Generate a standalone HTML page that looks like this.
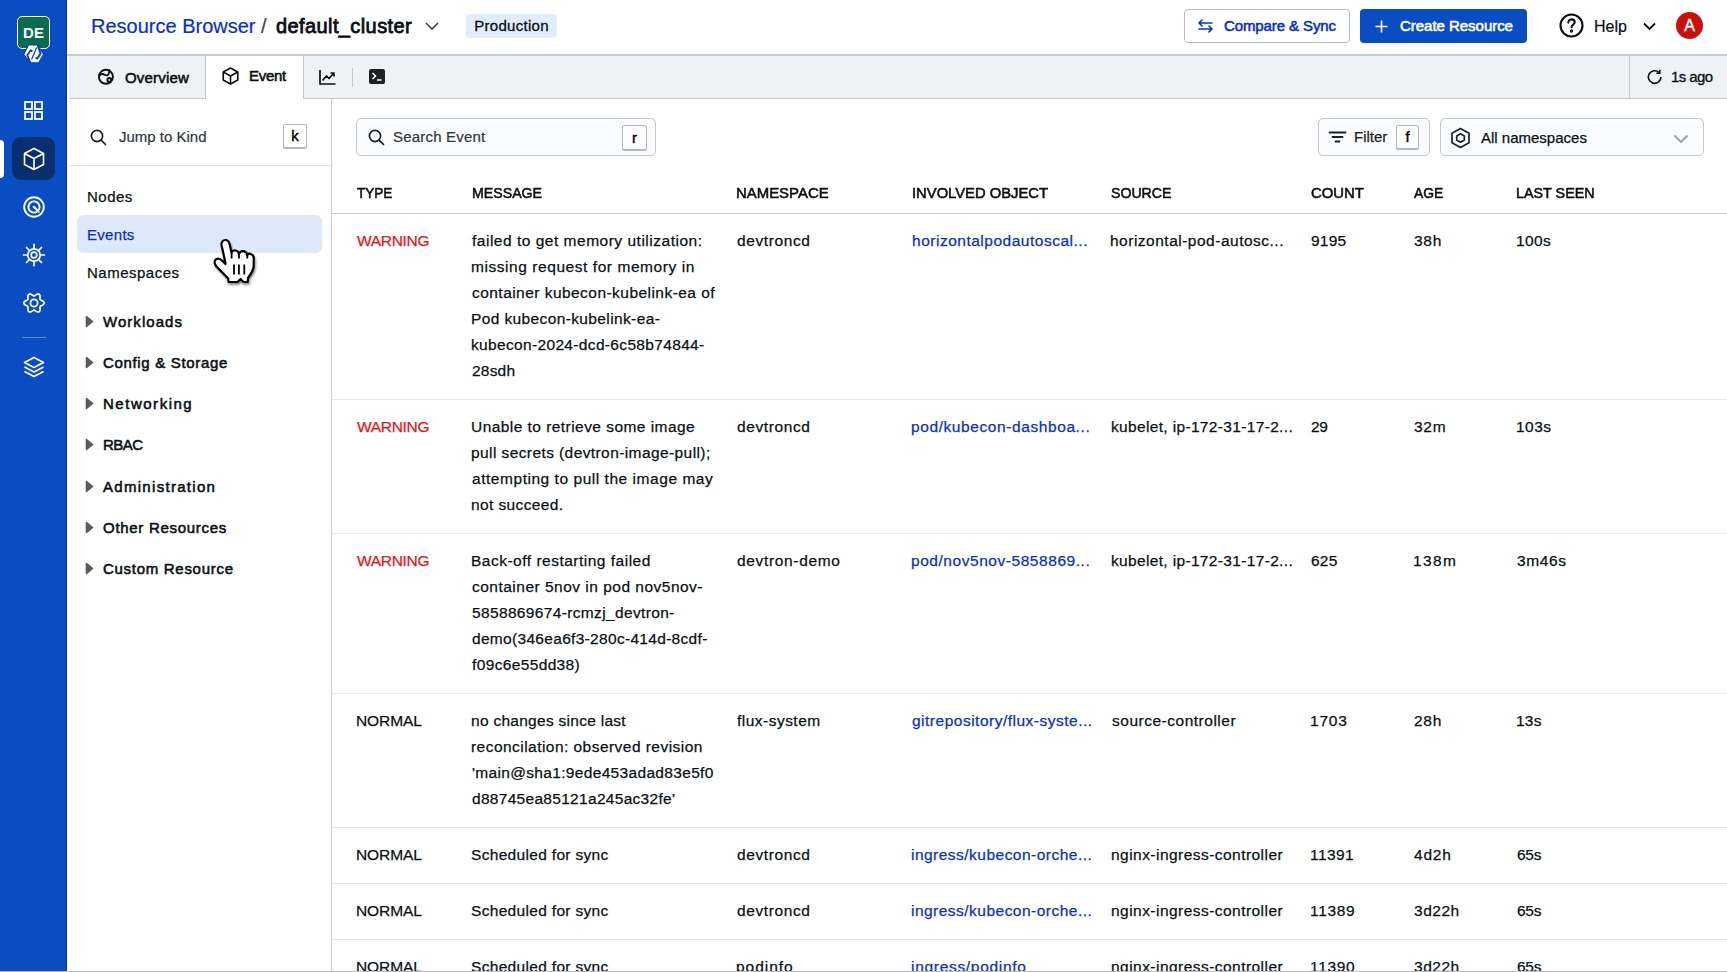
<!DOCTYPE html>
<html><head><meta charset="utf-8">
<style>
*{box-sizing:border-box;margin:0;padding:0}
html,body{width:1727px;height:972px;overflow:hidden;background:#fff;font-family:"Liberation Sans",sans-serif;color:#0b0f14}
.a{position:absolute;white-space:nowrap}
#nav{position:absolute;left:0;top:0;width:67px;height:972px;background:#0a4dc2;border-right:1px solid #0933a8}
#hdr{position:absolute;left:67px;top:0;width:1660px;height:54px;background:#fff}
#tabs{position:absolute;left:67px;top:54px;width:1660px;height:45px;background:#eef1f5;border-top:2px solid #c6c9ce;border-bottom:1px solid #c3c7cc}
#left{position:absolute;left:67px;top:99px;width:265px;height:873px;background:#fff;border-right:1px solid #c9cdd3}
#bottomline{position:absolute;left:0;top:971px;width:1727px;height:1px;background:#b9bcc0}
.t15{font-size:15px;line-height:20px}
.b{font-weight:400;-webkit-text-stroke:0.55px currentColor}
.kbd{position:absolute;border:1px solid #b5b9be;border-radius:2px;background:#fff;box-shadow:0 1px 0 #b5b9be;font-size:15px;text-align:center;color:#000;-webkit-text-stroke:0.4px currentColor}
.cell{position:absolute;font-size:15.5px;line-height:26px;white-space:nowrap;color:#0b0f14;letter-spacing:0.75px;-webkit-text-stroke:0.25px currentColor}
.num{letter-spacing:0.3px}
.typ{letter-spacing:0.2px}
.rowb{position:absolute;left:332px;width:1395px;height:1px;background:#e4e8ed}
.link{color:#0a30c0}
.warn{color:#e3161d}
</style></head><body>
<div id="nav">
  <!-- logo -->
  <div class="a" style="left:17px;top:16px;width:33px;height:33px;background:#0a6b53;border:1.5px solid #fff;border-radius:5px;color:#fff;font-size:15px;font-weight:700;text-align:center;line-height:31px">DE</div>
  <svg class="a" style="left:23px;top:43px" width="22" height="22" viewBox="0 0 22 22"><path d="M0.7 11.4 L5.6 1.9 L14.3 1.9 L20.6 11.1 L15.7 19.8 L7.1 19.8 Z" fill="#fff" stroke="#0a3dc0" stroke-width="1.1" stroke-linejoin="round"/><path d="M14.6 2.2 L17.6 10.6 L14.2 15.6 L12.6 14.4" fill="none" stroke="#0a3dc0" stroke-width="1.9" stroke-linejoin="round"/><path d="M7.2 19.6 L4.3 12 L7.8 7.2 L9.4 8.4" fill="none" stroke="#0a3dc0" stroke-width="1.9" stroke-linejoin="round"/><path d="M13.6 4.5 L8.6 16.5" stroke="#0a3dc0" stroke-width="1.2"/></svg>
  <!-- grid -->
  <svg class="a" style="left:24px;top:101px" width="19" height="19" viewBox="0 0 19 19" fill="none" stroke="#fff" stroke-width="1.8"><rect x="1" y="1" width="7" height="7"/><rect x="11" y="1" width="7" height="7"/><rect x="1" y="11" width="7" height="7"/><rect x="11" y="11" width="7" height="7"/></svg>
  <!-- active -->
  <div class="a" style="left:0;top:140px;width:4px;height:38px;background:#fff;border-radius:0 4px 4px 0"></div>
  <div class="a" style="left:12px;top:137px;width:43px;height:43px;background:#0a2f6e;border-radius:9px"></div>
  <svg class="a" style="left:23px;top:147px" width="22" height="24" viewBox="0 0 22 24" fill="none" stroke="#fff" stroke-width="1.6" stroke-linejoin="round"><path d="M11 1.5 L20.5 6.5 L20.5 17.5 L11 22.5 L1.5 17.5 L1.5 6.5 Z"/><path d="M1.5 6.5 L11 11.5 L20.5 6.5 M11 11.5 L11 22.5"/></svg>
  <!-- target -->
  <svg class="a" style="left:23px;top:195.5px" width="22" height="22" viewBox="0 0 22 22" fill="none" stroke="#fff" stroke-width="1.9" stroke-linecap="round"><circle cx="11" cy="11" r="9.8"/><path d="M13.37 16.08 A5.6 5.6 0 1 1 16.08 13.37"/><path d="M11 11 L15.8 15.8"/><circle cx="11" cy="11" r="1.3" fill="#fff" stroke="none"/></svg>
  <!-- sun/bug -->
  <svg class="a" style="left:22px;top:243px" width="24" height="24" viewBox="0 0 24 24" fill="none" stroke="#fff" stroke-width="1.7"><circle cx="12" cy="12" r="6.2"/><circle cx="12" cy="12" r="2.8"/><path d="M18.20 12.00 L23.20 12.00 M16.38 16.38 L19.92 19.92 M12.00 18.20 L12.00 23.20 M7.62 16.38 L4.08 19.92 M5.80 12.00 L0.80 12.00 M7.62 7.62 L4.08 4.08 M12.00 5.80 L12.00 0.80 M16.38 7.62 L19.92 4.08"/></svg>
  <!-- gear -->
  <svg class="a" style="left:21.7px;top:290.5px" width="24" height="24" viewBox="0 0 24 24" fill="none" stroke="#fff" stroke-width="1.7" stroke-linejoin="round"><path d="M22.10 12.00 L21.96 12.65 L21.58 13.26 L21.00 13.79 L20.31 14.23 L19.60 14.58 L18.97 14.89 L18.47 15.19 L18.15 15.55 L18.00 16.01 L17.98 16.59 L18.03 17.29 L18.08 18.08 L18.05 18.90 L17.88 19.66 L17.55 20.30 L17.05 20.75 L16.42 20.96 L15.70 20.93 L14.95 20.69 L14.23 20.31 L13.57 19.87 L12.98 19.47 L12.47 19.20 L12.00 19.10 L11.53 19.20 L11.02 19.47 L10.43 19.87 L9.77 20.31 L9.05 20.69 L8.30 20.93 L7.58 20.96 L6.95 20.75 L6.45 20.30 L6.12 19.66 L5.95 18.90 L5.92 18.08 L5.97 17.29 L6.02 16.59 L6.00 16.01 L5.85 15.55 L5.53 15.19 L5.03 14.89 L4.40 14.58 L3.69 14.23 L3.00 13.79 L2.42 13.26 L2.04 12.65 L1.90 12.00 L2.04 11.35 L2.42 10.74 L3.00 10.21 L3.69 9.77 L4.40 9.42 L5.03 9.11 L5.53 8.81 L5.85 8.45 L6.00 7.99 L6.02 7.41 L5.97 6.71 L5.92 5.92 L5.95 5.10 L6.12 4.34 L6.45 3.70 L6.95 3.25 L7.58 3.04 L8.30 3.07 L9.05 3.31 L9.77 3.69 L10.43 4.13 L11.02 4.53 L11.53 4.80 L12.00 4.90 L12.47 4.80 L12.98 4.53 L13.57 4.13 L14.23 3.69 L14.95 3.31 L15.70 3.07 L16.42 3.04 L17.05 3.25 L17.55 3.70 L17.88 4.34 L18.05 5.10 L18.08 5.92 L18.03 6.71 L17.98 7.41 L18.00 7.99 L18.15 8.45 L18.47 8.81 L18.97 9.11 L19.60 9.42 L20.31 9.77 L21.00 10.21 L21.58 10.74 L21.96 11.35 L22.10 12.00 Z"/><circle cx="12" cy="12" r="3.6"/></svg>
  <div class="a" style="left:22px;top:337px;width:24px;height:1px;background:#5b86d6"></div>
  <!-- layers -->
  <svg class="a" style="left:23px;top:356px" width="22" height="22" viewBox="0 0 22 22" fill="none" stroke="#fff" stroke-width="1.7" stroke-linejoin="round"><path d="M11 1.5 L20.5 6.5 L11 11.5 L1.5 6.5 Z"/><path d="M1.5 11 L11 16 L20.5 11"/><path d="M1.5 15.5 L11 20.5 L20.5 15.5"/></svg>
</div>

<div id="hdr">
  <div class="a" style="left:24px;top:13px;font-size:20px;line-height:26px;color:#0a30c0;-webkit-text-stroke:0.2px currentColor">Resource Browser <span style="color:#3b444c">/</span></div>
  <div class="a b" style="left:209px;top:13px;font-size:20px;line-height:26px;color:#0b0f14;letter-spacing:0.4px;-webkit-text-stroke:0.8px currentColor">default_cluster</div>
  <svg class="a" style="left:358px;top:20px" width="14" height="12" viewBox="0 0 14 12" fill="none" stroke="#3b444c" stroke-width="1.6"><path d="M1 3 L7 9 L13 3"/></svg>
  <div class="a" style="left:399px;top:14px;width:91px;height:24px;background:#e1edfb;border-radius:4px;font-size:15px;line-height:24px;text-align:center;color:#0b0f14;letter-spacing:0.3px;-webkit-text-stroke:0.3px currentColor">Production</div>
  <div class="a" style="left:1117px;top:9px;width:166px;height:34px;border:1px solid #b7bcc2;border-radius:4px;background:#fff"></div>
  <svg class="a" style="left:1131px;top:19px" width="15" height="14" viewBox="0 0 15 14" fill="none" stroke="#0a30c0" stroke-width="1.6" stroke-linecap="round" stroke-linejoin="round"><path d="M4 1 L1 4 L4 7 M1 4 H14 M11 7 L14 10 L11 13 M14 10 H1"/></svg>
  <div class="a b" style="left:1157px;top:16px;font-size:15px;line-height:20px;color:#0a30c0;letter-spacing:-0.1px">Compare &amp; Sync</div>
  <div class="a" style="left:1293px;top:9px;width:167px;height:34px;border-radius:4px;background:#0a4dc2"></div>
  <svg class="a" style="left:1308px;top:20px" width="13" height="13" viewBox="0 0 13 13" fill="none" stroke="#fff" stroke-width="1.6"><path d="M6.5 0.5 V12.5 M0.5 6.5 H12.5"/></svg>
  <div class="a b" style="left:1333px;top:16px;font-size:15px;line-height:20px;color:#fff;letter-spacing:-0.03px">Create Resource</div>
  <svg class="a" style="left:1492px;top:13px" width="25" height="25" viewBox="0 0 25 25" fill="none" stroke="#0b0f14" stroke-width="2.1"><circle cx="12.5" cy="12.5" r="11"/><path d="M9.3 9.6 C9.3 7.6 10.8 6.4 12.5 6.4 C14.3 6.4 15.7 7.6 15.7 9.3 C15.7 11.4 12.5 11.6 12.5 14.2" stroke-linecap="round"/><circle cx="12.5" cy="18" r="0.6" fill="#0b0f14"/></svg>
  <div class="a" style="left:1527px;top:16px;font-size:16px;line-height:22px;color:#0b0f14;-webkit-text-stroke:0.2px currentColor">Help</div>
  <svg class="a" style="left:1576px;top:22px" width="13" height="9" viewBox="0 0 13 9" fill="none" stroke="#0b0f14" stroke-width="1.8"><path d="M1 1.5 L6.5 7 L12 1.5"/></svg>
  <div class="a" style="left:1609px;top:12px;width:27px;height:27px;border-radius:50%;background:#c8100f;color:#fff;font-size:15px;line-height:27px;text-align:center;font-size:16px;-webkit-text-stroke:0.4px currentColor">A</div>
</div>
<div id="tabs">
  <div class="a" style="left:0;top:0;width:2px;height:43px;background:#fff"></div>
  <div class="a" style="left:138px;top:0;width:99px;height:43px;background:#fff;border-left:1px solid #c3c7cc;border-right:1px solid #c3c7cc"></div>
  <svg class="a" style="left:29px;top:12px" width="20" height="20" viewBox="0 0 20 20" fill="none" stroke="#0b0f14" stroke-width="1.9" stroke-linecap="round" stroke-linejoin="round"><circle cx="9.9" cy="8.8" r="7"/><path d="M3.4 7.6 C5.4 5.6 7.2 5.8 8.6 6.8 C10 7.8 11.6 7.6 12.6 6 C13.3 4.8 13.6 3.4 13.5 2.3"/><circle cx="13.3" cy="11.9" r="1.9"/></svg>
  <div class="a b" style="left:58px;top:12px;font-size:15px;line-height:20px;letter-spacing:0.2px">Overview</div>
  <svg class="a" style="left:155px;top:11px" width="17" height="18" viewBox="0 0 17 18" fill="none" stroke="#0b0f14" stroke-width="1.6" stroke-linejoin="round"><path d="M8.5 1 L15.8 5 L15.8 13 L8.5 17 L1.2 13 L1.2 5 Z"/><path d="M1.2 5 L8.5 9 L15.8 5 M8.5 9 V17"/></svg>
  <div class="a b" style="left:182px;top:10px;font-size:15px;line-height:20px;letter-spacing:-0.28px">Event</div>
  <svg class="a" style="left:252px;top:12.5px" width="17" height="16" viewBox="0 0 17 16" fill="none" stroke="#0b0f14" stroke-width="1.7" stroke-linejoin="round"><path d="M1 1 V15 H16.5"/><path d="M3.5 11.5 L7.5 7 L10 9.5 L15 4 M11.5 4 H15 V7.5"/></svg>
  <div class="a" style="left:285px;top:12px;width:1px;height:19px;background:#c3c7cc"></div>
  <svg class="a" style="left:302px;top:13px" width="16" height="15" viewBox="0 0 16 15"><rect x="0" y="0" width="16" height="15" rx="2" fill="#1d2126"/><path d="M3.5 4 L6.5 7 L3.5 10" stroke="#fff" stroke-width="1.5" fill="none"/><path d="M8 11 H12.5" stroke="#fff" stroke-width="1.5"/></svg>
  <div class="a" style="left:1562px;top:0;width:1px;height:43px;background:#c3c7cc"></div>
  <svg class="a" style="left:1580px;top:13px" width="16" height="16" viewBox="0 0 16 16" fill="none" stroke="#0b0f14" stroke-width="1.6"><path d="M14 8 A6.3 6.3 0 1 1 12 3.4"/><path d="M12.8 0.8 V4.2 H9.4"/></svg>
  <div class="a" style="left:1604px;top:11px;font-size:15px;line-height:20px;letter-spacing:-0.6px;-webkit-text-stroke:0.3px currentColor">1s ago</div>
</div>
<div id="left">
  <svg class="a" style="left:23px;top:30px" width="17" height="17" viewBox="0 0 17 17" fill="none" stroke="#1d2126" stroke-width="1.7" stroke-linecap="round"><circle cx="7" cy="7" r="5.6"/><path d="M11.2 11.2 L15.5 15.5"/></svg>
  <div class="a" style="left:52px;top:28px;font-size:15px;line-height:20px;color:#2f363d;-webkit-text-stroke:0.2px currentColor">Jump to Kind</div>
  <div class="kbd" style="left:216px;top:25px;width:24px;height:24px;line-height:22px">k</div>
  <div class="a" style="left:2px;top:66px;width:262px;height:1px;background:#e1e5ea"></div>
  <div class="a" style="left:20px;top:88px;font-size:15px;line-height:20px;letter-spacing:0.5px;-webkit-text-stroke:0.25px currentColor">Nodes</div>
  <div class="a" style="left:10px;top:116px;width:245px;height:38px;background:#dde9f8;border-radius:6px"></div>
  <div class="a" style="left:20px;top:126px;font-size:15px;line-height:20px;color:#0a30c0;letter-spacing:0.3px;-webkit-text-stroke:0.25px currentColor">Events</div>
  <div class="a" style="left:20px;top:164px;font-size:15px;line-height:20px;letter-spacing:0.5px;-webkit-text-stroke:0.25px currentColor">Namespaces</div>
  <svg class="a" style="left:18px;top:216.0px" width="9" height="13" viewBox="0 0 9 13"><path d="M1.5 1.5 L7.5 6.5 L1.5 11.5 Z" fill="#555b62" stroke="#555b62" stroke-width="1.6" stroke-linejoin="round"/></svg><div class="a b" style="left:36px;top:213.0px;font-size:15px;line-height:20px;letter-spacing:1.04px">Workloads</div>
<svg class="a" style="left:18px;top:257.1px" width="9" height="13" viewBox="0 0 9 13"><path d="M1.5 1.5 L7.5 6.5 L1.5 11.5 Z" fill="#555b62" stroke="#555b62" stroke-width="1.6" stroke-linejoin="round"/></svg><div class="a b" style="left:36px;top:254.1px;font-size:15px;line-height:20px;letter-spacing:0.67px">Config &amp; Storage</div>
<svg class="a" style="left:18px;top:298.3px" width="9" height="13" viewBox="0 0 9 13"><path d="M1.5 1.5 L7.5 6.5 L1.5 11.5 Z" fill="#555b62" stroke="#555b62" stroke-width="1.6" stroke-linejoin="round"/></svg><div class="a b" style="left:36px;top:295.3px;font-size:15px;line-height:20px;letter-spacing:1.52px">Networking</div>
<svg class="a" style="left:18px;top:339.4px" width="9" height="13" viewBox="0 0 9 13"><path d="M1.5 1.5 L7.5 6.5 L1.5 11.5 Z" fill="#555b62" stroke="#555b62" stroke-width="1.6" stroke-linejoin="round"/></svg><div class="a b" style="left:36px;top:336.4px;font-size:15px;line-height:20px;letter-spacing:-0.5px">RBAC</div>
<svg class="a" style="left:18px;top:380.6px" width="9" height="13" viewBox="0 0 9 13"><path d="M1.5 1.5 L7.5 6.5 L1.5 11.5 Z" fill="#555b62" stroke="#555b62" stroke-width="1.6" stroke-linejoin="round"/></svg><div class="a b" style="left:36px;top:377.6px;font-size:15px;line-height:20px;letter-spacing:1.3px">Administration</div>
<svg class="a" style="left:18px;top:421.8px" width="9" height="13" viewBox="0 0 9 13"><path d="M1.5 1.5 L7.5 6.5 L1.5 11.5 Z" fill="#555b62" stroke="#555b62" stroke-width="1.6" stroke-linejoin="round"/></svg><div class="a b" style="left:36px;top:418.8px;font-size:15px;line-height:20px;letter-spacing:0.71px">Other Resources</div>
<svg class="a" style="left:18px;top:462.9px" width="9" height="13" viewBox="0 0 9 13"><path d="M1.5 1.5 L7.5 6.5 L1.5 11.5 Z" fill="#555b62" stroke="#555b62" stroke-width="1.6" stroke-linejoin="round"/></svg><div class="a b" style="left:36px;top:459.9px;font-size:15px;line-height:20px;letter-spacing:0.71px">Custom Resource</div>

</div>
<div id="main">
  <div class="a" style="left:356px;top:118px;width:300px;height:38px;border:1px solid #c3c8ce;border-radius:5px;background:#f9fbfd"></div>
  <svg class="a" style="left:368px;top:129px" width="18" height="17" viewBox="0 0 18 17" fill="none" stroke="#1d2126" stroke-width="1.7" stroke-linecap="round"><circle cx="7" cy="7" r="5.6"/><path d="M11.2 11.2 L15.5 15.5"/></svg>
  <div class="a" style="left:393px;top:127px;font-size:15px;line-height:20px;color:#2f363d;letter-spacing:0.2px;-webkit-text-stroke:0.2px currentColor">Search Event</div>
  <div class="kbd" style="left:622px;top:125px;width:25px;height:25px;line-height:23px">r</div>

  <div class="a" style="left:1318px;top:118px;width:112px;height:38px;border:1px solid #c3c8ce;border-radius:5px;background:#f9fbfd"></div>
  <svg class="a" style="left:1328px;top:131px" width="19" height="12" viewBox="0 0 19 12" fill="none" stroke="#1d2126" stroke-width="1.8" stroke-linecap="round"><path d="M1.5 1.5 H17.5 M4.5 6 H14.5 M7.5 10.5 H11.5"/></svg>
  <div class="a" style="left:1354px;top:127px;font-size:15px;line-height:20px;color:#1d2126;-webkit-text-stroke:0.25px currentColor">Filter</div>
  <div class="kbd" style="left:1396px;top:125px;width:23px;height:24px;line-height:22px">f</div>

  <div class="a" style="left:1440px;top:118px;width:264px;height:38px;border:1px solid #c3c8ce;border-radius:5px;background:#f9fbfd"></div>
  <svg class="a" style="left:1450px;top:127px" width="21" height="22" viewBox="0 0 21 22" fill="none" stroke="#1d2126" stroke-width="1.7" stroke-linejoin="round"><path d="M10.5 1.5 L19 6.2 L19 15.8 L10.5 20.5 L2 15.8 L2 6.2 Z"/><path d="M10.5 6.8 L14.3 8.9 L14.3 13.1 L10.5 15.2 L6.7 13.1 L6.7 8.9 Z"/></svg>
  <div class="a" style="left:1481px;top:128px;font-size:15px;line-height:20px;color:#0b0f14;-webkit-text-stroke:0.25px currentColor">All namespaces</div>
  <svg class="a" style="left:1673px;top:134px" width="16" height="10" viewBox="0 0 16 10" fill="none" stroke="#9aa1a9" stroke-width="1.8"><path d="M1.5 1.5 L8 8 L14.5 1.5"/></svg>
  <div class="a b" style="left:357.0px;top:183px;font-size:15px;line-height:20px;transform:scaleX(0.903);transform-origin:0 0">TYPE</div><div class="a b" style="left:471.5px;top:183px;font-size:15px;line-height:20px;transform:scaleX(0.944);transform-origin:0 0">MESSAGE</div><div class="a b" style="left:736.4px;top:183px;font-size:15px;line-height:20px;transform:scaleX(0.995);transform-origin:0 0">NAMESPACE</div><div class="a b" style="left:911.7px;top:183px;font-size:15px;line-height:20px;transform:scaleX(0.985);transform-origin:0 0">INVOLVED OBJECT</div><div class="a b" style="left:1111.4px;top:183px;font-size:15px;line-height:20px;transform:scaleX(0.942);transform-origin:0 0">SOURCE</div><div class="a b" style="left:1310.8px;top:183px;font-size:15px;line-height:20px;transform:scaleX(0.993);transform-origin:0 0">COUNT</div><div class="a b" style="left:1413.8px;top:183px;font-size:15px;line-height:20px;transform:scaleX(0.922);transform-origin:0 0">AGE</div><div class="a b" style="left:1516.0px;top:183px;font-size:15px;line-height:20px;transform:scaleX(0.956);transform-origin:0 0">LAST SEEN</div><div class="a" style="left:332px;top:213px;width:1395px;height:1px;background:#c9cfd6"></div>
<div class="cell warn" style="left:357px;top:228px;letter-spacing:-0.30px">WARNING</div><div class="cell" style="left:472px;top:228px;letter-spacing:0.51px">failed to get memory utilization:</div><div class="cell" style="left:471px;top:254px;letter-spacing:0.56px">missing request for memory in</div><div class="cell" style="left:472px;top:280px;letter-spacing:0.46px">container kubecon-kubelink-ea of</div><div class="cell" style="left:471px;top:306px;letter-spacing:0.38px">Pod kubecon-kubelink-ea-</div><div class="cell" style="left:471px;top:332px;letter-spacing:0.34px">kubecon-2024-dcd-6c58b74844-</div><div class="cell" style="left:472px;top:358px;letter-spacing:0.20px">28sdh</div><div class="cell" style="left:737px;top:228px;letter-spacing:0.61px">devtroncd</div><div class="cell link" style="left:912px;top:228px;letter-spacing:0.51px">horizontalpodautoscal...</div><div class="cell" style="left:1110px;top:228px;letter-spacing:0.50px">horizontal-pod-autosc...</div><div class="cell" style="left:1311px;top:228px;letter-spacing:0.20px">9195</div><div class="cell" style="left:1414px;top:228px;letter-spacing:0.75px">38h</div><div class="cell" style="left:1516px;top:228px;letter-spacing:0.40px">100s</div>
<div class="rowb" style="top:399px"></div>
<div class="cell warn" style="left:357px;top:414px;letter-spacing:-0.30px">WARNING</div><div class="cell" style="left:471px;top:414px;letter-spacing:0.45px">Unable to retrieve some image</div><div class="cell" style="left:471px;top:440px;letter-spacing:0.41px">pull secrets (devtron-image-pull);</div><div class="cell" style="left:472px;top:466px;letter-spacing:0.54px">attempting to pull the image may</div><div class="cell" style="left:471px;top:492px;letter-spacing:0.39px">not succeed.</div><div class="cell" style="left:737px;top:414px;letter-spacing:0.61px">devtroncd</div><div class="cell link" style="left:911px;top:414px;letter-spacing:0.59px">pod/kubecon-dashboa...</div><div class="cell" style="left:1111px;top:414px;letter-spacing:0.34px">kubelet, ip-172-31-17-2...</div><div class="cell" style="left:1311px;top:414px;letter-spacing:-0.30px">29</div><div class="cell" style="left:1414px;top:414px;letter-spacing:0.70px">32m</div><div class="cell" style="left:1516px;top:414px;letter-spacing:0.47px">103s</div>
<div class="rowb" style="top:533px"></div>
<div class="cell warn" style="left:357px;top:548px;letter-spacing:-0.30px">WARNING</div><div class="cell" style="left:471px;top:548px;letter-spacing:0.50px">Back-off restarting failed</div><div class="cell" style="left:472px;top:574px;letter-spacing:0.49px">container 5nov in pod nov5nov-</div><div class="cell" style="left:472px;top:600px;letter-spacing:0.35px">5858869674-rcmzj_devtron-</div><div class="cell" style="left:472px;top:626px;letter-spacing:0.31px">demo(346ea6f3-280c-414d-8cdf-</div><div class="cell" style="left:472px;top:652px;letter-spacing:0.36px">f09c6e55dd38)</div><div class="cell" style="left:737px;top:548px;letter-spacing:0.66px">devtron-demo</div><div class="cell link" style="left:911px;top:548px;letter-spacing:0.55px">pod/nov5nov-5858869...</div><div class="cell" style="left:1111px;top:548px;letter-spacing:0.34px">kubelet, ip-172-31-17-2...</div><div class="cell" style="left:1311px;top:548px;letter-spacing:0.20px">625</div><div class="cell" style="left:1413px;top:548px;letter-spacing:1.40px">138m</div><div class="cell" style="left:1517px;top:548px;letter-spacing:0.60px">3m46s</div>
<div class="rowb" style="top:693px"></div>
<div class="cell" style="left:356px;top:708px;letter-spacing:-0.08px">NORMAL</div><div class="cell" style="left:471px;top:708px;letter-spacing:0.28px">no changes since last</div><div class="cell" style="left:471px;top:734px;letter-spacing:0.46px">reconcilation: observed revision</div><div class="cell" style="left:472px;top:760px;letter-spacing:0.33px">'main@sha1:9ede453adad83e5f0</div><div class="cell" style="left:472px;top:786px;letter-spacing:0.30px">d88745ea85121a245ac32fe'</div><div class="cell" style="left:737px;top:708px;letter-spacing:0.48px">flux-system</div><div class="cell link" style="left:912px;top:708px;letter-spacing:0.50px">gitrepository/flux-syste...</div><div class="cell" style="left:1112px;top:708px;letter-spacing:0.51px">source-controller</div><div class="cell" style="left:1310px;top:708px;letter-spacing:0.80px">1703</div><div class="cell" style="left:1414px;top:708px;letter-spacing:0.70px">28h</div><div class="cell" style="left:1516px;top:708px;letter-spacing:0.20px">13s</div>
<div class="rowb" style="top:827px"></div>
<div class="cell" style="left:356px;top:842px;letter-spacing:-0.08px">NORMAL</div><div class="cell" style="left:471px;top:842px;letter-spacing:0.32px">Scheduled for sync</div><div class="cell" style="left:737px;top:842px;letter-spacing:0.61px">devtroncd</div><div class="cell link" style="left:911px;top:842px;letter-spacing:0.48px">ingress/kubecon-orche...</div><div class="cell" style="left:1111px;top:842px;letter-spacing:0.46px">nginx-ingress-controller</div><div class="cell" style="left:1310px;top:842px;letter-spacing:0.42px">11391</div><div class="cell" style="left:1414px;top:842px;letter-spacing:0.80px">4d2h</div><div class="cell" style="left:1517px;top:842px;letter-spacing:-0.30px">65s</div>
<div class="rowb" style="top:883px"></div>
<div class="cell" style="left:356px;top:898px;letter-spacing:-0.08px">NORMAL</div><div class="cell" style="left:471px;top:898px;letter-spacing:0.32px">Scheduled for sync</div><div class="cell" style="left:737px;top:898px;letter-spacing:0.61px">devtroncd</div><div class="cell link" style="left:911px;top:898px;letter-spacing:0.48px">ingress/kubecon-orche...</div><div class="cell" style="left:1111px;top:898px;letter-spacing:0.46px">nginx-ingress-controller</div><div class="cell" style="left:1310px;top:898px;letter-spacing:0.68px">11389</div><div class="cell" style="left:1414px;top:898px;letter-spacing:0.53px">3d22h</div><div class="cell" style="left:1517px;top:898px;letter-spacing:-0.30px">65s</div>
<div class="rowb" style="top:939px"></div>
<div class="cell" style="left:356px;top:954px;letter-spacing:-0.08px">NORMAL</div><div class="cell" style="left:471px;top:954px;letter-spacing:0.32px">Scheduled for sync</div><div class="cell" style="left:736px;top:954px;letter-spacing:0.97px">podinfo</div><div class="cell link" style="left:911px;top:954px;letter-spacing:0.70px">ingress/podinfo</div><div class="cell" style="left:1111px;top:954px;letter-spacing:0.46px">nginx-ingress-controller</div><div class="cell" style="left:1310px;top:954px;letter-spacing:0.68px">11390</div><div class="cell" style="left:1414px;top:954px;letter-spacing:0.53px">3d22h</div><div class="cell" style="left:1517px;top:954px;letter-spacing:-0.30px">65s</div>
<div class="rowb" style="top:995px"></div>
</div>
<svg class="a" style="left:205px;top:232px;overflow:visible" width="60" height="60" viewBox="0 0 60 60">
<defs><filter id="sh" x="-30%" y="-30%" width="160%" height="160%"><feGaussianBlur in="SourceAlpha" stdDeviation="1"/><feOffset dx="0.5" dy="2" result="o"/><feComponentTransfer><feFuncA type="linear" slope="0.45"/></feComponentTransfer><feMerge><feMergeNode/><feMergeNode in="SourceGraphic"/></feMerge></filter></defs>
<path filter="url(#sh)" d="M20.5 31 L16.5 13 C16 9.5 18.5 8 20.3 8 C22.5 8 24 9.5 24.6 12 L26.5 20.5 C27.2 18.8 28.8 18.3 30.5 18.5 C32.5 18.8 33.6 20 34 22 C34.8 19.8 36.5 19 38.3 19.2 C40.3 19.5 41.8 20.8 42.3 23 C43 21.8 44.5 21.5 45.8 22 C47.8 22.6 48.8 24 48.8 26.5 L48.6 35 C48 39 46 42 43 46 L42.8 50 L38.5 50 L35.5 47 L32.5 50 L23.5 50 L23.2 46.5 L12 35 C9.5 32.5 9 29.5 10.5 27.8 C12 26 15 26.5 17 28.5 L20.5 32 Z" fill="#fff" stroke="#000" stroke-width="2.2" stroke-linejoin="round"/>
<path d="M29 32.5 V42.5 M33.9 32.5 V42.5 M39.3 32.5 V42.5 M26.6 20.5 V26.5 M34 22 V26.5 M42.3 23 V26.5" stroke="#000" stroke-width="1.8"/>
</svg>
<div id="bottomline"></div>
</body></html>
